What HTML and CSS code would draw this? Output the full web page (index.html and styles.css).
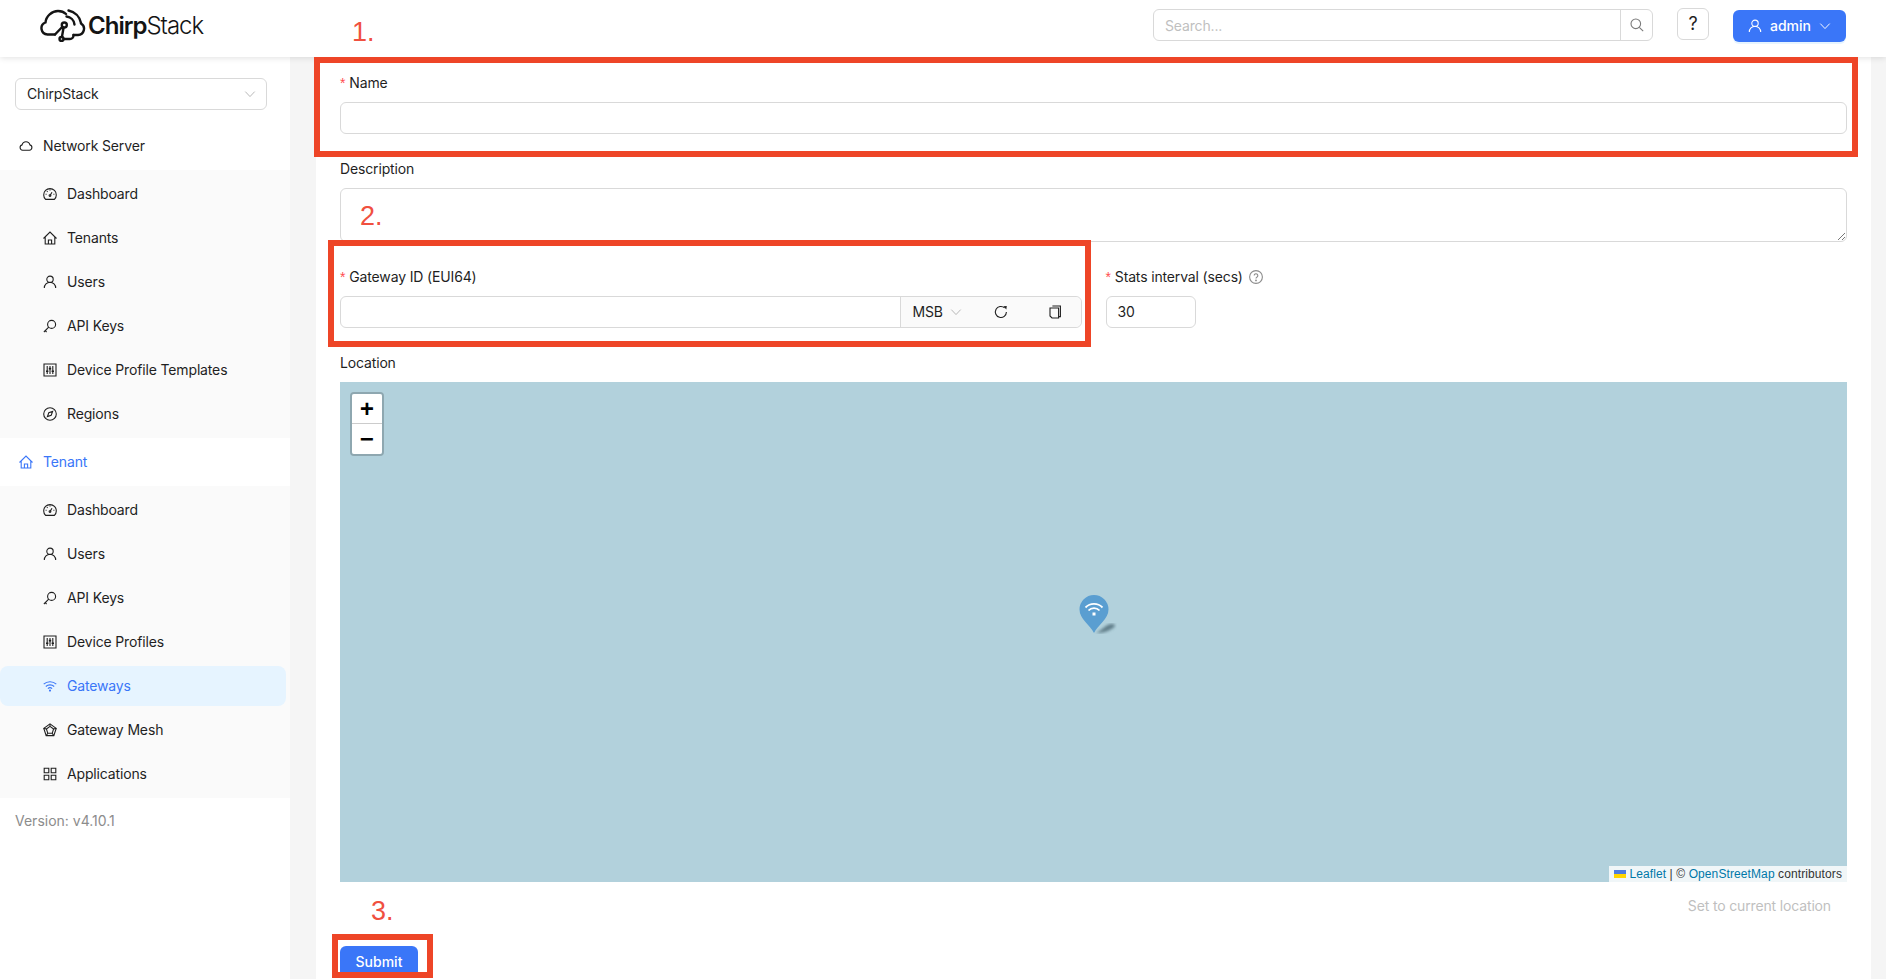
FILE: index.html
```html
<!DOCTYPE html>
<html lang="en">
  <head>
    <meta charset="UTF-8" />
    <title>ChirpStack</title>
    <link rel="stylesheet" href="styles.css">
  </head>
  <body>
    <!-- Icon sprite -->
    <svg class="sprite" xmlns="http://www.w3.org/2000/svg">
      <symbol id="i-cloud" viewBox="0 0 14 14"><path d="M3.6 11.200a2.700 2.700 0 0 1-.5-5.300A4 4 0 0 1 10.900 5.900a2.700 2.700 0 0 1-.5 5.300z" /></symbol>
      <symbol id="i-dash" viewBox="0 0 14 14"><path d="M2.600 12.400A6.300 6.300 0 1 1 11.400 12.400z" /><path d="M7 8.500 9 5.200M2.600 7.300h1M10.400 7.300h1M7 2.600v1M3.900 4.200l.7.7" /><circle cx="7" cy="8.600" r=".9" /></symbol>
      <symbol id="i-home" viewBox="0 0 14 14"><path d="M.5 7.500 7 1l6.500 6.500M2.200 6v7h9.600V6" /><path d="M5.400 13V9h3.200v4" /></symbol>
      <symbol id="i-user" viewBox="0 0 14 14"><circle cx="7" cy="4.300" r="3.200" /><path d="M1.300 13a5.700 5.700 0 0 1 11.400 0" /></symbol>
      <symbol id="i-key" viewBox="0 0 14 14"><circle cx="8.600" cy="5.400" r="4" /><path d="M5.700 8.200.9 13M2.200 11.700 3.600 13" /></symbol>
      <symbol id="i-sliders" viewBox="0 0 14 14"><path d="M1 1h12v12H1z" /><path d="M4.200 3v8M7 3v8M9.800 3v8" /><path class="thick" d="M3 8.200h2.400M5.800 5.600h2.400M8.600 8.200H11" /></symbol>
      <symbol id="i-compass" viewBox="0 0 14 14"><circle cx="7" cy="7" r="6.300" /><path d="M4.400 9.600 5.800 5.800 9.600 4.400 8.200 8.200z" /></symbol>
      <symbol id="i-wifi" viewBox="0 0 14 14"><path d="M.7 5.200a9.200 9.200 0 0 1 12.600 0M2.800 7.500a6.200 6.200 0 0 1 8.400 0M4.900 9.600a3.200 3.200 0 0 1 4.200 0" /><circle cx="7" cy="11.600" r=".5" /></symbol>
      <symbol id="i-mesh" viewBox="0 0 14 14"><path d="M7 .9 13.200 5.400 10.800 12.600H3.200L.8 5.400z" /><path d="M7 3.400 10.600 6 9.200 10.300H4.800L3.400 6zM7 .9v2.500M13.200 5.400 10.600 6M10.800 12.600 9.200 10.300M3.200 12.600 4.800 10.300M.8 5.400 3.400 6" /></symbol>
      <symbol id="i-apps" viewBox="0 0 14 14"><path d="M1.200 1.200h4.600v4.600H1.200zM8.200 1.200h4.600v4.600H8.200zM1.200 8.200h4.600v4.600H1.200zM8.200 8.200h4.600v4.600H8.200z" /></symbol>
      <symbol id="i-down" viewBox="0 0 14 14"><path d="M1.500 4.200 7 10l5.500-5.800" /></symbol>
      <symbol id="i-search" viewBox="0 0 14 14"><circle cx="5.800" cy="5.800" r="4.800" /><path d="m9.300 9.300 3.900 3.900" /></symbol>
      <symbol id="i-reload" viewBox="0 0 14 14"><path d="M12.400 7A5.500 5.500 0 1 1 10.600 2.900" /><path class="solid" d="M9.400 1.200 12.800 1l-.5 3.600z" /></symbol>
      <symbol id="i-copy" viewBox="0 0 14 14"><path d="M4.400 1h8v10.600h-1.600" /><path d="M2 3h8.600v10H4l-2-2z" /></symbol>
      <symbol id="i-help" viewBox="0 0 14 14"><circle cx="7" cy="7" r="6.400" /><path d="M5.200 5.500a1.800 1.800 0 1 1 2.800 1.500c-.7.4-1 .8-1 1.600" /><circle cx="7" cy="10.400" r=".4" /></symbol>
    </svg>

    <div class="page">
      <!-- Header -->
      <header class="topbar">
        <div class="logo">
          <svg class="logo-mark" viewBox="0 0 46 33" xmlns="http://www.w3.org/2000/svg">
            <path d="M15 25.500H7.500A6.200 6.200 0 0 1 5.500 13.500C6 7 12 2 18 2c3 0 6 1 8 3" />
            <path d="M41 14.500a6.200 6.200 0 0 1-3 11.500H33.500" />
            <path d="M28.500 1.500a16 16 0 0 1 12.500 12.500M26.500 7.500a9 9 0 0 1 8 8" />
            <path d="M22.200 18 15 25.500M23.500 19 22 27.500M23.800 30H30a3.500 3.500 0 0 0 3.500-3.500V26" />
            <circle cx="24.300" cy="16" r="2.500" />
            <circle cx="21.500" cy="30" r="2" />
          </svg>
          <span class="logo-text"><b>Chirp</b>Stack</span>
        </div>
        <div class="search">
          <span class="search-input">Search...</span>
          <span class="search-btn"><svg class="icon"><use href="#i-search" /></svg></span>
        </div>
        <button class="help-btn">?</button>
        <button class="user-btn">
          <svg class="icon"><use href="#i-user" /></svg>
          <span>admin</span>
          <svg class="icon small"><use href="#i-down" /></svg>
        </button>
      </header>

      <div class="layout">
        <!-- Sidebar -->
        <aside class="sidebar">
          <div class="tenant-select">
            <span>ChirpStack</span>
            <svg class="icon small"><use href="#i-down" /></svg>
          </div>

          <div class="menu-head"><svg class="icon"><use href="#i-cloud" /></svg>Network Server</div>
          <ul class="submenu">
            <li><svg class="icon"><use href="#i-dash" /></svg>Dashboard</li>
            <li><svg class="icon"><use href="#i-home" /></svg>Tenants</li>
            <li><svg class="icon"><use href="#i-user" /></svg>Users</li>
            <li><svg class="icon"><use href="#i-key" /></svg>API Keys</li>
            <li><svg class="icon"><use href="#i-sliders" /></svg>Device Profile Templates</li>
            <li><svg class="icon"><use href="#i-compass" /></svg>Regions</li>
          </ul>

          <div class="menu-head active"><svg class="icon"><use href="#i-home" /></svg>Tenant</div>
          <ul class="submenu">
            <li><svg class="icon"><use href="#i-dash" /></svg>Dashboard</li>
            <li><svg class="icon"><use href="#i-user" /></svg>Users</li>
            <li><svg class="icon"><use href="#i-key" /></svg>API Keys</li>
            <li><svg class="icon"><use href="#i-sliders" /></svg>Device Profiles</li>
            <li class="selected"><svg class="icon"><use href="#i-wifi" /></svg>Gateways</li>
            <li><svg class="icon"><use href="#i-mesh" /></svg>Gateway Mesh</li>
            <li><svg class="icon"><use href="#i-apps" /></svg>Applications</li>
          </ul>

          <div class="version">Version: v4.10.1</div>
        </aside>

        <!-- Gateway form -->
        <main class="content">
          <form class="card">
            <div class="field">
              <label class="required">Name</label>
              <div class="input"></div>
            </div>

            <div class="field">
              <label>Description</label>
              <div class="input textarea">
                <svg class="resize" viewBox="0 0 10 10"><path d="M9 2 2 9M9 6 6 9" /></svg>
              </div>
            </div>

            <div class="field-row">
              <div class="field">
                <label class="required">Gateway ID (EUI64)</label>
                <div class="input-group">
                  <div class="group-input"></div>
                  <div class="group-addon">
                    <span class="msb">MSB <svg class="icon small"><use href="#i-down" /></svg></span>
                    <svg class="icon action reload"><use href="#i-reload" /></svg>
                    <svg class="icon action copy"><use href="#i-copy" /></svg>
                  </div>
                </div>
              </div>
              <div class="field">
                <label class="required">Stats interval (secs) <svg class="icon hint"><use href="#i-help" /></svg></label>
                <div class="input number">30</div>
              </div>
            </div>

            <div class="field map-field">
              <label>Location</label>
              <div class="map">
                <div class="zoom-control">
                  <span class="zoom-btn">+</span>
                  <span class="zoom-btn">−</span>
                </div>
                <svg class="marker" viewBox="0 0 48 44" xmlns="http://www.w3.org/2000/svg">
                  <defs><filter id="blur"><feGaussianBlur stdDeviation="1.500" /></filter></defs>
                  <path d="M17 38C22 36 26 30 32 29c5 0 5 2 2 4-4 3-10 5-17 5z" fill="#3d5a66" opacity=".7" filter="url(#blur)" />
                  <path d="M15 38C11 30 .5 24 .5 14.500a14.500 14.500 0 0 1 29 0C29.500 24 19 30 15 38z" fill="#5a9ed1" />
                  <path d="M6.500 12.500a12 12 0 0 1 17 0M9.500 15.500a7.500 7.500 0 0 1 11 0" fill="none" stroke="#fff" stroke-width="1.800" />
                  <rect x="13.500" y="17.500" width="3" height="3" fill="#fff" />
                </svg>
                <div class="attribution">
                  <svg class="flag" viewBox="0 0 12 8"><path fill="#4c7be1" d="M0 0h12v4H0z" /><path fill="#ffd500" d="M0 4h12v4H0z" /></svg>
                  <a>Leaflet</a> | © <a>OpenStreetMap</a> contributors
                </div>
              </div>
              <div class="map-actions"><span class="link-disabled">Set to current location</span></div>
            </div>

            <button class="submit" type="button">Submit</button>
          </form>
        </main>
      </div>

      <!-- Numbered red annotations drawn over the screenshot -->
      <div class="mark mark-name"></div>
      <div class="mark mark-id"></div>
      <div class="mark mark-submit"></div>
      <span class="mark-num num-1">1.</span>
      <span class="mark-num num-2">2.</span>
      <span class="mark-num num-3">3.</span>
    </div>
  </body>
</html>
```

FILE: styles.css
```css
html,
body {
  margin: 0;
  height: 100%;
  overflow: hidden;
}
body {
  font-family: Inter, "Noto Sans", sans-serif;
  font-size: 14px;
  line-height: 22px;
  letter-spacing: -0.15px;
  color: #1f1f1f;
}
.sprite {
  display: none;
}
.icon {
  width: 14px;
  height: 14px;
  flex: none;
  fill: none;
  stroke: currentColor;
  stroke-width: 1.1;
}
.icon.small {
  width: 12px;
  height: 12px;
  color: #b4b4b4;
}
.thick {
  stroke-width: 1.6;
}
.solid {
  fill: currentColor;
  stroke: none;
}
.page {
  position: relative;
  display: flex;
  flex-direction: column;
  height: 100%;
}

/* Header */
.topbar {
  position: relative;
  z-index: 2;
  display: flex;
  align-items: flex-start;
  height: 57px;
  box-sizing: border-box;
  padding: 9px 40px 0 40px;
  background: #ffffff;
  box-shadow: 0 1px 6px rgba(0, 0, 0, 0.12);
}
.logo {
  display: flex;
  align-items: center;
  gap: 2px;
  margin-right: auto;
}
.logo-mark {
  width: 46px;
  height: 33px;
  fill: none;
  stroke: #141414;
  stroke-width: 2.4;
  stroke-linecap: round;
}
.logo-text {
  font-size: 24px;
  line-height: 33px;
  font-weight: 300;
  color: #141414;
  letter-spacing: -1px;
}
.logo-text b {
  font-weight: 600;
}
.search {
  display: flex;
  width: 500px;
  height: 32px;
  box-sizing: border-box;
  margin-right: 24px;
  border: 1px solid #d9d9d9;
  border-radius: 6px;
}
.search-input {
  flex: 1;
  padding: 5px 11px;
  color: #bfbfbf;
}
.search-btn {
  display: flex;
  align-items: center;
  justify-content: center;
  width: 31px;
  border-left: 1px solid #d9d9d9;
  color: #7a7a7a;
}
.help-btn {
  width: 32px;
  height: 32px;
  margin: -1px 24px 0 0;
  padding: 0;
  background: #ffffff;
  border: 1px solid #d9d9d9;
  border-radius: 6px;
  font: 18px/1 Inter, sans-serif;
  color: #1f1f1f;
}
.user-btn {
  display: flex;
  align-items: center;
  justify-content: center;
  gap: 8px;
  width: 113px;
  height: 32px;
  margin-top: 1px;
  padding: 0;
  background: #3a76f8;
  border: none;
  border-radius: 6px;
  box-shadow: 0 2px 0 rgba(5, 145, 255, 0.1);
  font: 500 14px/22px Inter, sans-serif;
  color: #ffffff;
}
.user-btn .icon.small {
  color: #ffffff;
}

/* Sidebar */
.layout {
  display: flex;
  flex: 1;
  min-height: 0;
}
.sidebar {
  flex: none;
  width: 290px;
  background: #ffffff;
}
.tenant-select {
  display: flex;
  align-items: center;
  justify-content: space-between;
  width: 252px;
  height: 32px;
  box-sizing: border-box;
  margin: 21px 0 12px 15px;
  padding: 0 10px 0 11px;
  border: 1px solid #d9d9d9;
  border-radius: 6px;
}
.menu-head {
  display: flex;
  align-items: center;
  gap: 10px;
  height: 48px;
  padding-left: 19px;
}
.menu-head.active {
  color: #3a76f8;
}
.submenu {
  margin: 0;
  padding: 4px 0;
  list-style: none;
  background: #fafafa;
}
.submenu li {
  display: flex;
  align-items: center;
  gap: 10px;
  height: 40px;
  margin-right: 4px;
  padding-left: 43px;
  border-radius: 8px;
}
.submenu li + li {
  margin-top: 4px;
}
.submenu li.selected {
  background: #e6f4ff;
  color: #3a76f8;
}
.version {
  padding: 12px 15px;
  letter-spacing: 0;
  color: #8c8c8c;
}

/* Form */
.content {
  flex: 1;
  min-width: 0;
  padding: 0 15px 0 26px;
  background: #f5f5f5;
}
.card {
  height: 100%;
  box-sizing: border-box;
  padding: 15px 24px 0;
  background: #ffffff;
}
.field {
  margin-bottom: 24px;
}
.field label {
  display: flex;
  align-items: center;
  height: 22px;
  margin-bottom: 8px;
}
.required::before {
  content: "*";
  margin-right: 4px;
  color: #ff4d4f;
  font-family: "Liberation Sans", sans-serif;
}
.input {
  height: 32px;
  box-sizing: border-box;
  border: 1px solid #d9d9d9;
  border-radius: 6px;
}
.textarea {
  position: relative;
  height: 54px;
}
.resize {
  position: absolute;
  right: 0;
  bottom: 0;
  width: 10px;
  height: 10px;
  fill: none;
  stroke: #777777;
}
.field-row {
  display: grid;
  grid-template-columns: 1fr 1fr;
  column-gap: 24px;
}
.input-group {
  display: flex;
  height: 32px;
  box-sizing: border-box;
  border: 1px solid #d9d9d9;
  border-radius: 6px;
}
.group-input {
  flex: 1;
}
.group-addon {
  display: flex;
  align-items: center;
  width: 180px;
  border-left: 1px solid #d9d9d9;
  background: #fafafa;
  border-radius: 0 6px 6px 0;
}
.msb {
  display: flex;
  align-items: center;
  gap: 7px;
  margin-left: 12px;
}
.action.reload {
  margin-left: 32px;
}
.action.copy {
  margin-left: 40px;
}
.hint {
  margin-left: 6px;
  color: #8c8c8c;
}
.number {
  width: 90px;
  padding: 4px 11px;
}
.map-field {
  margin-bottom: 24px;
}
.map {
  position: relative;
  height: 500px;
  background: #b2d1dc;
}
.zoom-control {
  position: absolute;
  top: 10px;
  left: 10px;
  display: flex;
  flex-direction: column;
  border: 2px solid rgba(0, 0, 0, 0.2);
  border-radius: 4px;
  background-clip: padding-box;
}
.zoom-btn {
  width: 30px;
  height: 30px;
  box-sizing: border-box;
  padding-top: 3px;
  background: #ffffff;
  font: bold 24px/27px "Liberation Mono", monospace;
  letter-spacing: 0;
  text-align: center;
  color: #000000;
}
.zoom-btn:first-child {
  border-bottom: 1px solid #cccccc;
  border-radius: 2px 2px 0 0;
}
.zoom-btn:last-child {
  border-radius: 0 0 2px 2px;
}
.marker {
  position: absolute;
  top: 213px;
  left: 739px;
  width: 48px;
  height: 44px;
}
.attribution {
  position: absolute;
  right: 0;
  bottom: 0;
  height: 16px;
  padding: 0 5px;
  background: rgba(255, 255, 255, 0.8);
  font: 12px/16px "Liberation Sans", sans-serif;
  letter-spacing: 0.1px;
  color: #333333;
  white-space: nowrap;
}
.attribution a {
  color: #0078a8;
}
.flag {
  display: inline-block;
  width: 12px;
  height: 8px;
}
.map-actions {
  display: flex;
  justify-content: flex-end;
  height: 32px;
  margin-top: 8px;
  padding-right: 16px;
  line-height: 32px;
}
.link-disabled {
  color: #bfbfbf;
}
.submit {
  display: block;
  width: 78px;
  height: 32px;
  padding: 0;
  background: #3a76f8;
  border: none;
  border-radius: 6px;
  font: 500 14px/22px Inter, sans-serif;
  color: #ffffff;
}

/* Annotations */
.mark {
  position: absolute;
  z-index: 3;
  box-sizing: border-box;
  border: 6px solid #ee4527;
}
.mark-name {
  top: 57px;
  left: 314px;
  width: 1544px;
  height: 100px;
}
.mark-id {
  top: 240px;
  left: 328px;
  width: 763px;
  height: 107px;
}
.mark-submit {
  top: 934px;
  left: 332px;
  width: 101px;
  height: 44px;
}
.mark-num {
  position: absolute;
  z-index: 3;
  font: 27px/27px "Liberation Sans", sans-serif;
  letter-spacing: 0;
  color: #f0503f;
}
.num-1 {
  top: 19px;
  left: 352px;
}
.num-2 {
  top: 203px;
  left: 360px;
}
.num-3 {
  top: 898px;
  left: 371px;
}
```
